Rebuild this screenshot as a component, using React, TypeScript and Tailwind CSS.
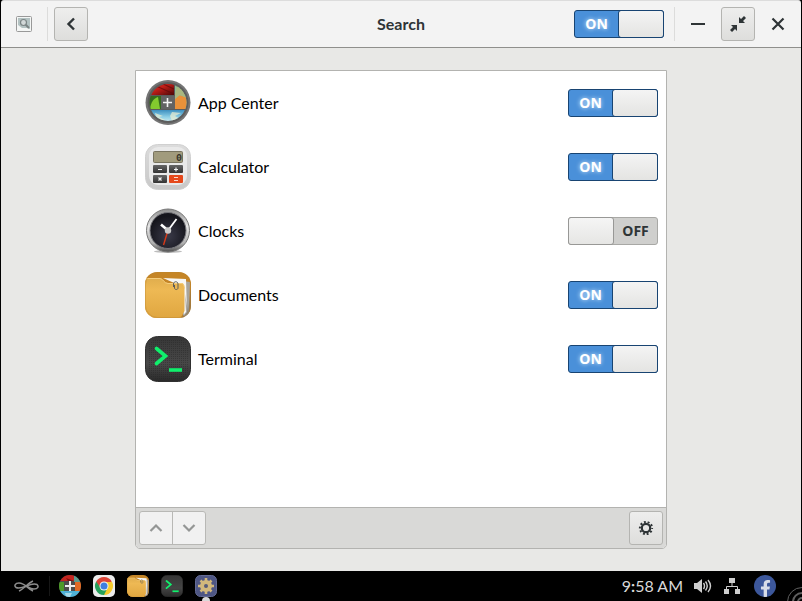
import { useState } from "react";
import type { ReactNode } from "react";
import { FaFacebookF } from "react-icons/fa";

type Source = { id: string; name: string; enabled: boolean; icon: ReactNode };

function AppCenterIcon() {
  return (
    <svg width="46" height="46" viewBox="0 0 46 46" aria-hidden="true">
      <defs>
        <clipPath id="acClip">
          <circle cx="23" cy="22.500" r="18.5" />
        </clipPath>
        <linearGradient id="acRed" x1="0" y1="0" x2="1" y2="1">
          <stop offset="0" stopColor="#8f1512" />
          <stop offset="0.45" stopColor="#c9201a" />
          <stop offset="1" stopColor="#4c0909" />
        </linearGradient>
        <linearGradient id="acSky" x1="0" y1="0" x2="0" y2="1">
          <stop offset="0" stopColor="#3c8fc0" />
          <stop offset="0.5" stopColor="#8ed0e6" />
          <stop offset="1" stopColor="#e9f6f3" />
        </linearGradient>
      </defs>
      <circle cx="23" cy="22.500" r="22.500" fill="#757575" />
      <circle cx="23" cy="22.500" r="20.500" fill="#5d5d5d" />
      <g clipPath="url(#acClip)">
        <rect width="46" height="46" fill="#5b5b5b" />
        <path d="M2 2h27v13H2z" fill="url(#acRed)" />
        <path d="M9 5l20 9M16 3l13 6" stroke="#5f0b0b" strokeWidth="1.200" opacity="0.7" />
        <path d="M30 2h14v27H30z" fill="#8fbd94" />
        <path d="M30 19l4-4 10 3v11H30z" fill="#e8913a" />
        <path d="M33 3l11 16-9-4-5 4v-5z" fill="#a9b780" />
        <path d="M2 16h14v13H2z" fill="#356c1d" />
        <path d="M5 29c1-7 3-10 8-12l2 12z" fill="#83cb2e" />
        <path d="M2 30h42v14H2z" fill="url(#acSky)" />
        <path d="M10 33l8 3-4 1 6 3h-8zM27 32l9 1-6 3 5 3-8 2-2-5z" fill="#eef0d2" opacity="0.7" />
      </g>
      <rect x="16" y="16" width="14" height="13" fill="#636363" />
      <path d="M22.500 18v9M18 22.500h9" stroke="#f4f4f4" strokeWidth="1.600" />
    </svg>
  );
}

function AppCenterSmallIcon() {
  return (
    <svg width="22" height="22" viewBox="0 0 22 22" aria-hidden="true">
      <defs>
        <clipPath id="acSmall">
          <circle cx="11" cy="11" r="11" />
        </clipPath>
      </defs>
      <g clipPath="url(#acSmall)">
        <rect width="22" height="22" fill="#4c4c4c" />
        <path d="M0 0h15v6H0z" fill="#c3241f" />
        <path d="M7 3l8 3H9z" fill="#7c1010" />
        <path d="M15 0h7v7h-7z" fill="#5d9a8f" />
        <path d="M16 7h6v9h-6z" fill="#e06a25" />
        <path d="M0 7h5v9H0z" fill="#4d9a28" />
        <path d="M0 16h22v6H0z" fill="#4fb1d6" />
        <path d="M6 18h7l-2 4H7z" fill="#a5d8e6" />
      </g>
      <path d="M11 6v10M6 11h10" stroke="#ededed" strokeWidth="2" />
    </svg>
  );
}

function CalculatorIcon() {
  return (
    <svg width="46" height="46" viewBox="0 0 46 46" aria-hidden="true">
      <defs>
        <linearGradient id="calcBody" x1="0" y1="0" x2="0" y2="1">
          <stop offset="0" stopColor="#dcdcdc" />
          <stop offset="1" stopColor="#c8c8c8" />
        </linearGradient>
        <linearGradient id="calcKey" x1="0" y1="0" x2="0" y2="1">
          <stop offset="0" stopColor="#666" />
          <stop offset="1" stopColor="#333" />
        </linearGradient>
      </defs>
      <rect x="0.500" y="0.500" width="45" height="45" rx="12" fill="url(#calcBody)" stroke="#d0d0d0" />
      <rect x="4" y="3" width="38" height="38" rx="9" fill="#e9e9e9" />
      <rect x="8.500" y="7.500" width="29" height="11" rx="1" fill="#a19b7d" stroke="#77735e" />
      <text x="31" y="17" fontSize="10" fontWeight="bold" fontFamily="'Liberation Mono', monospace" fill="#36342a">0</text>
      <rect x="8" y="21" width="14" height="8" rx="1" fill="url(#calcKey)" />
      <rect x="24" y="21" width="14" height="8" rx="1" fill="url(#calcKey)" />
      <rect x="8" y="31" width="14" height="8" rx="1" fill="url(#calcKey)" />
      <rect x="24" y="31" width="14" height="8" rx="1" fill="#e5481b" />
      <path d="M13 25.500h4M29 25.500h4M31 23.500v4M13.500 33.500l3 3M16.500 33.500l-3 3" stroke="#f2f2f2" strokeWidth="1.200" />
      <path d="M29 33.500h4M29 36.500h4" stroke="#f9d8cc" />
    </svg>
  );
}

function ClockIcon() {
  return (
    <svg width="46" height="46" viewBox="0 0 46 46" aria-hidden="true">
      <defs>
        <linearGradient id="clockRim" x1="0" y1="0" x2="0" y2="1">
          <stop offset="0" stopColor="#8d8d8d" />
          <stop offset="0.4" stopColor="#e6e6e6" />
          <stop offset="0.8" stopColor="#b0b0b0" />
          <stop offset="1" stopColor="#4c4c4c" />
        </linearGradient>
        <radialGradient id="clockFace" cx="0.5" cy="0.65" r="0.55">
          <stop offset="0" stopColor="#3a3a49" />
          <stop offset="1" stopColor="#15151c" />
        </radialGradient>
      </defs>
      <ellipse cx="23" cy="43.500" rx="14" ry="1.500" fill="#bdbdbd" />
      <circle cx="23" cy="22.500" r="21.500" fill="url(#clockRim)" stroke="#777" />
      <circle cx="23" cy="22.500" r="18" fill="url(#clockFace)" stroke="#77777c" />
      <path d="M22.500 24l-4 13" stroke="#d83a18" strokeWidth="1.400" />
      <path d="M23 22.500l-7-6" stroke="#fff" strokeWidth="2.600" />
      <path d="M23 22.500L31.500 11" stroke="#fff" strokeWidth="1.800" />
      <circle cx="23" cy="22.500" r="3.200" fill="#c9c9c9" />
    </svg>
  );
}

function FolderIcon({ size }: { size: number }) {
  return (
    <svg width={size} height={size} viewBox="0 0 46 46" aria-hidden="true">
      <defs>
        <linearGradient id={`fold${size}`} x1="0" y1="0" x2="0" y2="1">
          <stop offset="0" stopColor="#e0ad4d" />
          <stop offset="0.3" stopColor="#eeb954" />
          <stop offset="1" stopColor="#e0a640" />
        </linearGradient>
        <clipPath id={`foldClip${size}`}>
          <rect width="46" height="46" rx="12" />
        </clipPath>
      </defs>
      <g clipPath={`url(#foldClip${size})`}>
        <rect width="46" height="46" fill="#c58526" />
        <path d="M38 9l7 1-1 34h-6z" fill="#a9a59b" />
        <path d="M18 6l23 1 1 33-3 4-3-30z" fill="#f7f7f5" />
        <path d="M0 6h15c3 0 4 5 8 5h13c3 0 3 2 3.500 5v23l-4 7H0z" fill={`url(#fold${size})`} />
        <path d="M0 6.500h15c3 0 4 5 8 5h13c3 0 3 2 3.500 5" fill="none" stroke="#f5cd7d" />
        <path d="M40 22l1 18-5 6h10V16l-3 24z" fill="#6d665b" opacity="0.5" />
      </g>
      <path d="M29.500 13v3c0 2 3.500 2 3.500 0v-4c0-3-4.500-3-4.500 0v3" fill="none" stroke="#5f5e58" />
      <rect x="0.500" y="0.500" width="45" height="45" rx="12" fill="none" stroke="#b98433" opacity="0.4" />
    </svg>
  );
}

function TerminalIcon({ size }: { size: number }) {
  return (
    <svg width={size} height={size} viewBox="0 0 46 46" aria-hidden="true">
      <defs>
        <linearGradient id={`term${size}`} x1="0" y1="0" x2="0" y2="1">
          <stop offset="0" stopColor="#373737" />
          <stop offset="0.6" stopColor="#484848" />
          <stop offset="1" stopColor="#2a2a2a" />
        </linearGradient>
        <pattern id={`mesh${size}`} width="2" height="2" patternUnits="userSpaceOnUse">
          <rect width="1" height="1" fill="#222" />
        </pattern>
      </defs>
      <rect x="0.500" y="0.500" width="45" height="45" rx="12" fill={`url(#term${size})`} stroke="#303030" />
      <rect x="3" y="3" width="40" height="40" rx="9" fill={`url(#mesh${size})`} opacity="0.4" />
      <path d="M11.500 12.500l9 7.500-9 7.500" fill="none" stroke="#10f06c" strokeWidth="3.600" strokeLinecap="round" />
      <path d="M24 34h13" stroke="#10f06c" strokeWidth="3.600" />
    </svg>
  );
}

function ChromeIcon() {
  return (
    <svg width="22" height="22" viewBox="0 0 22 22" aria-hidden="true">
      <rect width="22" height="22" rx="5" fill="#ececec" />
      <path d="M11 11L3.200 6.500A9 9 0 0 1 18.800 6.500z" fill="#dc4437" />
      <path d="M11 11L18.800 6.500A9 9 0 0 1 11 20z" fill="#f7cb2d" />
      <path d="M11 11L11 20A9 9 0 0 1 3.200 6.500z" fill="#26a05a" />
      <path d="M11 7h8.100l-4.600 6z" fill="#f7cb2d" />
      <path d="M3.200 6.500l4.400 6.500L11 7z" fill="#dc4437" />
      <path d="M14.500 13L11 20 7.500 13z" fill="#26a05a" />
      <circle cx="11" cy="11" r="4.500" fill="#f3f3f3" />
      <circle cx="11" cy="11" r="3.500" fill="#3f7ee0" />
    </svg>
  );
}

function SettingsIcon() {
  return (
    <svg width="22" height="22" viewBox="0 0 22 22" aria-hidden="true">
      <rect x="0.500" y="0.500" width="21" height="21" rx="5" fill="#4e5684" stroke="#646b94" />
      <path d="M11 3v16M3 11h16M5.500 5.500l11 11M16.500 5.500l-11 11" stroke="#d2b87c" strokeWidth="2.600" />
      <circle cx="11" cy="11" r="6" fill="#d2b87c" />
      <circle cx="11" cy="11" r="2" fill="#585c79" />
    </svg>
  );
}

function GearIcon() {
  return (
    <svg width="16" height="16" viewBox="0 0 16 16" fill="none" stroke="#2e3436" aria-hidden="true">
      <circle cx="8" cy="8" r="4.200" strokeWidth="2.200" />
      <circle cx="8" cy="8" r="6.100" strokeWidth="2" strokeDasharray="1.900 1.933" strokeDashoffset="0.950" />
    </svg>
  );
}

function Switch({ label, checked, onChange }: { label: string; checked: boolean; onChange: () => void }) {
  return (
    <label
      className={
        checked
          ? "relative flex h-7 w-[90px] rounded-[3px] border border-[#184472] bg-[#4a90d9]"
          : "relative flex h-7 w-[90px] flex-row-reverse rounded-[3px] border border-[#a8a8a5] bg-[#cfcfcd]"
      }
    >
      <input type="checkbox" role="switch" aria-label={label} checked={checked} onChange={onChange} className="sr-only" />
      <span
        className={
          checked
            ? "flex flex-1 items-center justify-center font-['Open_Sans',sans-serif] text-sm font-bold text-white [text-shadow:0_0_4px_#d8ecff]"
            : "flex flex-1 items-center justify-center font-['Open_Sans',sans-serif] text-sm font-bold text-[#2e3436]"
        }
      >
        {checked ? "ON" : "OFF"}
      </span>
      <span
        className={
          checked
            ? "-my-px -mr-px w-[46px] rounded-[3px] border border-[#184472] bg-linear-to-b from-[#f4f4f4] to-[#e4e4e2]"
            : "-my-px -ml-px w-[46px] rounded-[3px] border border-[#989896] bg-linear-to-b from-[#f5f5f5] to-[#e6e6e4]"
        }
      />
    </label>
  );
}

const raised =
  "flex size-[34px] items-center justify-center rounded-[3px] border border-[#b4b4b1] bg-linear-to-b from-[#eeeeed] to-[#dededc] text-[#2e3436]";
const flat = "flex size-[34px] items-center justify-center text-[#2e3436]";

const initial: Source[] = [
  { id: "appcenter", name: "App Center", enabled: true, icon: <AppCenterIcon /> },
  { id: "calculator", name: "Calculator", enabled: true, icon: <CalculatorIcon /> },
  { id: "clocks", name: "Clocks", enabled: false, icon: <ClockIcon /> },
  { id: "documents", name: "Documents", enabled: true, icon: <FolderIcon size={46} /> },
  { id: "terminal", name: "Terminal", enabled: true, icon: <TerminalIcon size={46} /> },
];

function TitleBar({ enabled, onToggle }: { enabled: boolean; onToggle: () => void }) {
  return (
    <header className="grid h-12 grid-cols-[1fr_auto_1fr] items-center rounded-t-[3px] border-t border-b border-t-[#dcdcdc] border-b-[#8f8f8c] bg-[#f3f3f3] px-1.5">
      <div className="flex items-center gap-1.5">
        <div className={flat}>
          <svg width="16" height="16" viewBox="0 0 16 16" aria-hidden="true">
            <rect x="0.500" y="0.500" width="15" height="15" rx="1" fill="#f4f6f5" stroke="#999" />
            <path d="M2 2h12v11l-3-1H6L2 9z" fill="#b3c2c2" />
            <path d="M9.500 8.500l3.500 3.500" stroke="#7b8383" strokeWidth="2" />
            <circle cx="7.500" cy="6.500" r="3" fill="#d2d8d8" stroke="#7b8585" strokeWidth="1.200" />
          </svg>
        </div>
        <div className="h-[34px] w-px bg-[#dcdcdb]" />
        <button aria-label="Back" className={raised}>
          <svg width="16" height="16" viewBox="0 0 16 16" fill="none" stroke="currentColor" strokeWidth="2.400" aria-hidden="true">
            <path d="M11 2.500L5.500 8l5.500 5.500" />
          </svg>
        </button>
      </div>
      <h1 className="text-base font-bold text-[#2e3436]">Search</h1>
      <div className="flex items-center justify-end gap-1.5">
        <div className="mr-1">
          <Switch label="Search" checked={enabled} onChange={onToggle} />
        </div>
        <div className="h-[34px] w-px bg-[#dcdcdb]" />
        <button aria-label="Minimize" className={flat}>
          <svg width="16" height="16" viewBox="0 0 16 16" aria-hidden="true">
            <path d="M1 8h14" stroke="currentColor" strokeWidth="2" />
          </svg>
        </button>
        <button aria-label="Restore" className={raised}>
          <svg width="16" height="16" viewBox="0 0 16 16" aria-hidden="true">
            <path d="M9 1v6h6l-2-2 3-3L14 0l-3 3zM7 15V9H1l2 2-3 3 2 2 3-3z" fill="currentColor" />
          </svg>
        </button>
        <button aria-label="Close" className={flat}>
          <svg width="16" height="16" viewBox="0 0 16 16" aria-hidden="true">
            <path d="M2.500 2.500l11 11M13.500 2.500l-11 11" stroke="currentColor" strokeWidth="2.200" />
          </svg>
        </button>
      </div>
    </header>
  );
}

function Taskbar() {
  return (
    <footer className="flex h-[30px] items-center justify-between bg-black pl-[14px]">
      <nav className="flex items-center">
        <button aria-label="Menu">
          <svg width="25" height="14" viewBox="0 0 25 14" fill="none" stroke="#8c8c8c" strokeWidth="1.500" aria-hidden="true">
            <path d="M5 12C10 10 14 4 19 2" />
            <path d="M19 12C14 10 11 4 5 4 1 4 0 7 2 8.500c3 1.500 7 0 10.500-1.500S20 4 23 5.500c2 2 1 4.500-3 4.500-3 0-5-1.500-7.500-3" />
          </svg>
        </button>
        <div className="mr-[9px] ml-[10px] h-5 w-px bg-[#171717]" />
        <div className="flex items-center gap-3">
          <button aria-label="App Center"><AppCenterSmallIcon /></button>
          <button aria-label="Chrome"><ChromeIcon /></button>
          <button aria-label="Files"><FolderIcon size={22} /></button>
          <button aria-label="Terminal"><TerminalIcon size={22} /></button>
          <button aria-label="Settings" className="relative">
            <SettingsIcon />
            <span className="absolute -bottom-2 left-[7px] size-2 rounded-full bg-[#d8d8d8]" />
          </button>
        </div>
      </nav>
      <div className="flex items-center">
        <time className="text-base text-[#d9d9d9]">
          9<b>:</b>58 AM
        </time>
        <svg width="18" height="16" viewBox="0 0 18 16" className="ml-[11px]" fill="none" stroke="#cfcfcf" strokeWidth="1.400" aria-hidden="true">
          <path d="M0 5h3l5-4v14l-5-4H0z" fill="#cfcfcf" stroke="none" />
          <path d="M9.500 5q2 3 0 6M11.500 3.500q3.500 4.500 0 9M14 2q5 6 0 12" />
        </svg>
        <svg width="16" height="16" viewBox="0 0 16 16" className="ml-3" fill="#cfcfcf" aria-hidden="true">
          <path d="M5 0h6v5H5zM0 11h5v5H0zM11 11h5v5h-5z" />
          <path d="M8 5v4M2.500 11V8.500h11V11" fill="none" stroke="#cfcfcf" />
        </svg>
        <button aria-label="Facebook" className="ml-[14px] flex size-[22px] items-end justify-center overflow-hidden rounded-full bg-[#3c579b]">
          <FaFacebookF size={17} color="#d9dde8" />
        </button>
        <svg width="16" height="30" viewBox="0 0 16 30" className="ml-[10px]" fill="none" stroke="#606060" aria-hidden="true">
          <circle cx="16" cy="31" r="14.500" />
          <circle cx="16" cy="31" r="9" strokeWidth="2" />
          <circle cx="16" cy="31" r="4" strokeWidth="2" />
        </svg>
      </div>
    </footer>
  );
}

export default function App() {
  const [searchOn, setSearchOn] = useState(true);
  const [sources, setSources] = useState(initial);

  function toggle(id: string) {
    setSources((list) => list.map((s) => (s.id === id ? { ...s, enabled: !s.enabled } : s)));
  }

  return (
    <div className="flex h-screen flex-col bg-black font-['Lato',sans-serif]">
      <div className="mx-px flex min-h-0 flex-1 flex-col">
        <TitleBar enabled={searchOn} onToggle={() => setSearchOn(!searchOn)} />
        <main className="flex min-h-0 flex-1 justify-center bg-[#e8e8e6] py-[22px]">
          <section className="flex w-full max-w-[532px] flex-col overflow-hidden rounded-b-[5px] border border-[#b3b3b0] bg-white">
            <ul className="min-h-0 flex-1 overflow-hidden">
              {sources.map((s) => (
                <li key={s.id} className="flex h-16 items-center gap-[7px] pr-2 pl-[9px]">
                  {s.icon}
                  <span className="flex-1 text-base text-black">{s.name}</span>
                  <Switch label={s.name} checked={s.enabled} onChange={() => toggle(s.id)} />
                </li>
              ))}
            </ul>
            <div className="flex items-center justify-between border-t border-[#b3b3b0] bg-[#d9d9d7] p-[3px]">
              <div className="flex h-[34px] w-[67px] divide-x divide-[#b8b8b5] rounded-[3px] border border-[#b8b8b5] bg-[#f1f1f1] text-[#949695]">
                <button aria-label="Move up" disabled className="flex flex-1 items-center justify-center">
                  <svg width="16" height="16" viewBox="0 0 16 16" fill="none" stroke="currentColor" strokeWidth="2.200" aria-hidden="true">
                    <path d="M2.500 11L8 5.500l5.500 5.500" />
                  </svg>
                </button>
                <button aria-label="Move down" disabled className="flex flex-1 items-center justify-center">
                  <svg width="16" height="16" viewBox="0 0 16 16" fill="none" stroke="currentColor" strokeWidth="2.200" aria-hidden="true">
                    <path d="M2.500 5L8 10.500 13.500 5" />
                  </svg>
                </button>
              </div>
              <button aria-label="Search locations" className={raised}>
                <GearIcon />
              </button>
            </div>
          </section>
        </main>
      </div>
      <Taskbar />
    </div>
  );
}
